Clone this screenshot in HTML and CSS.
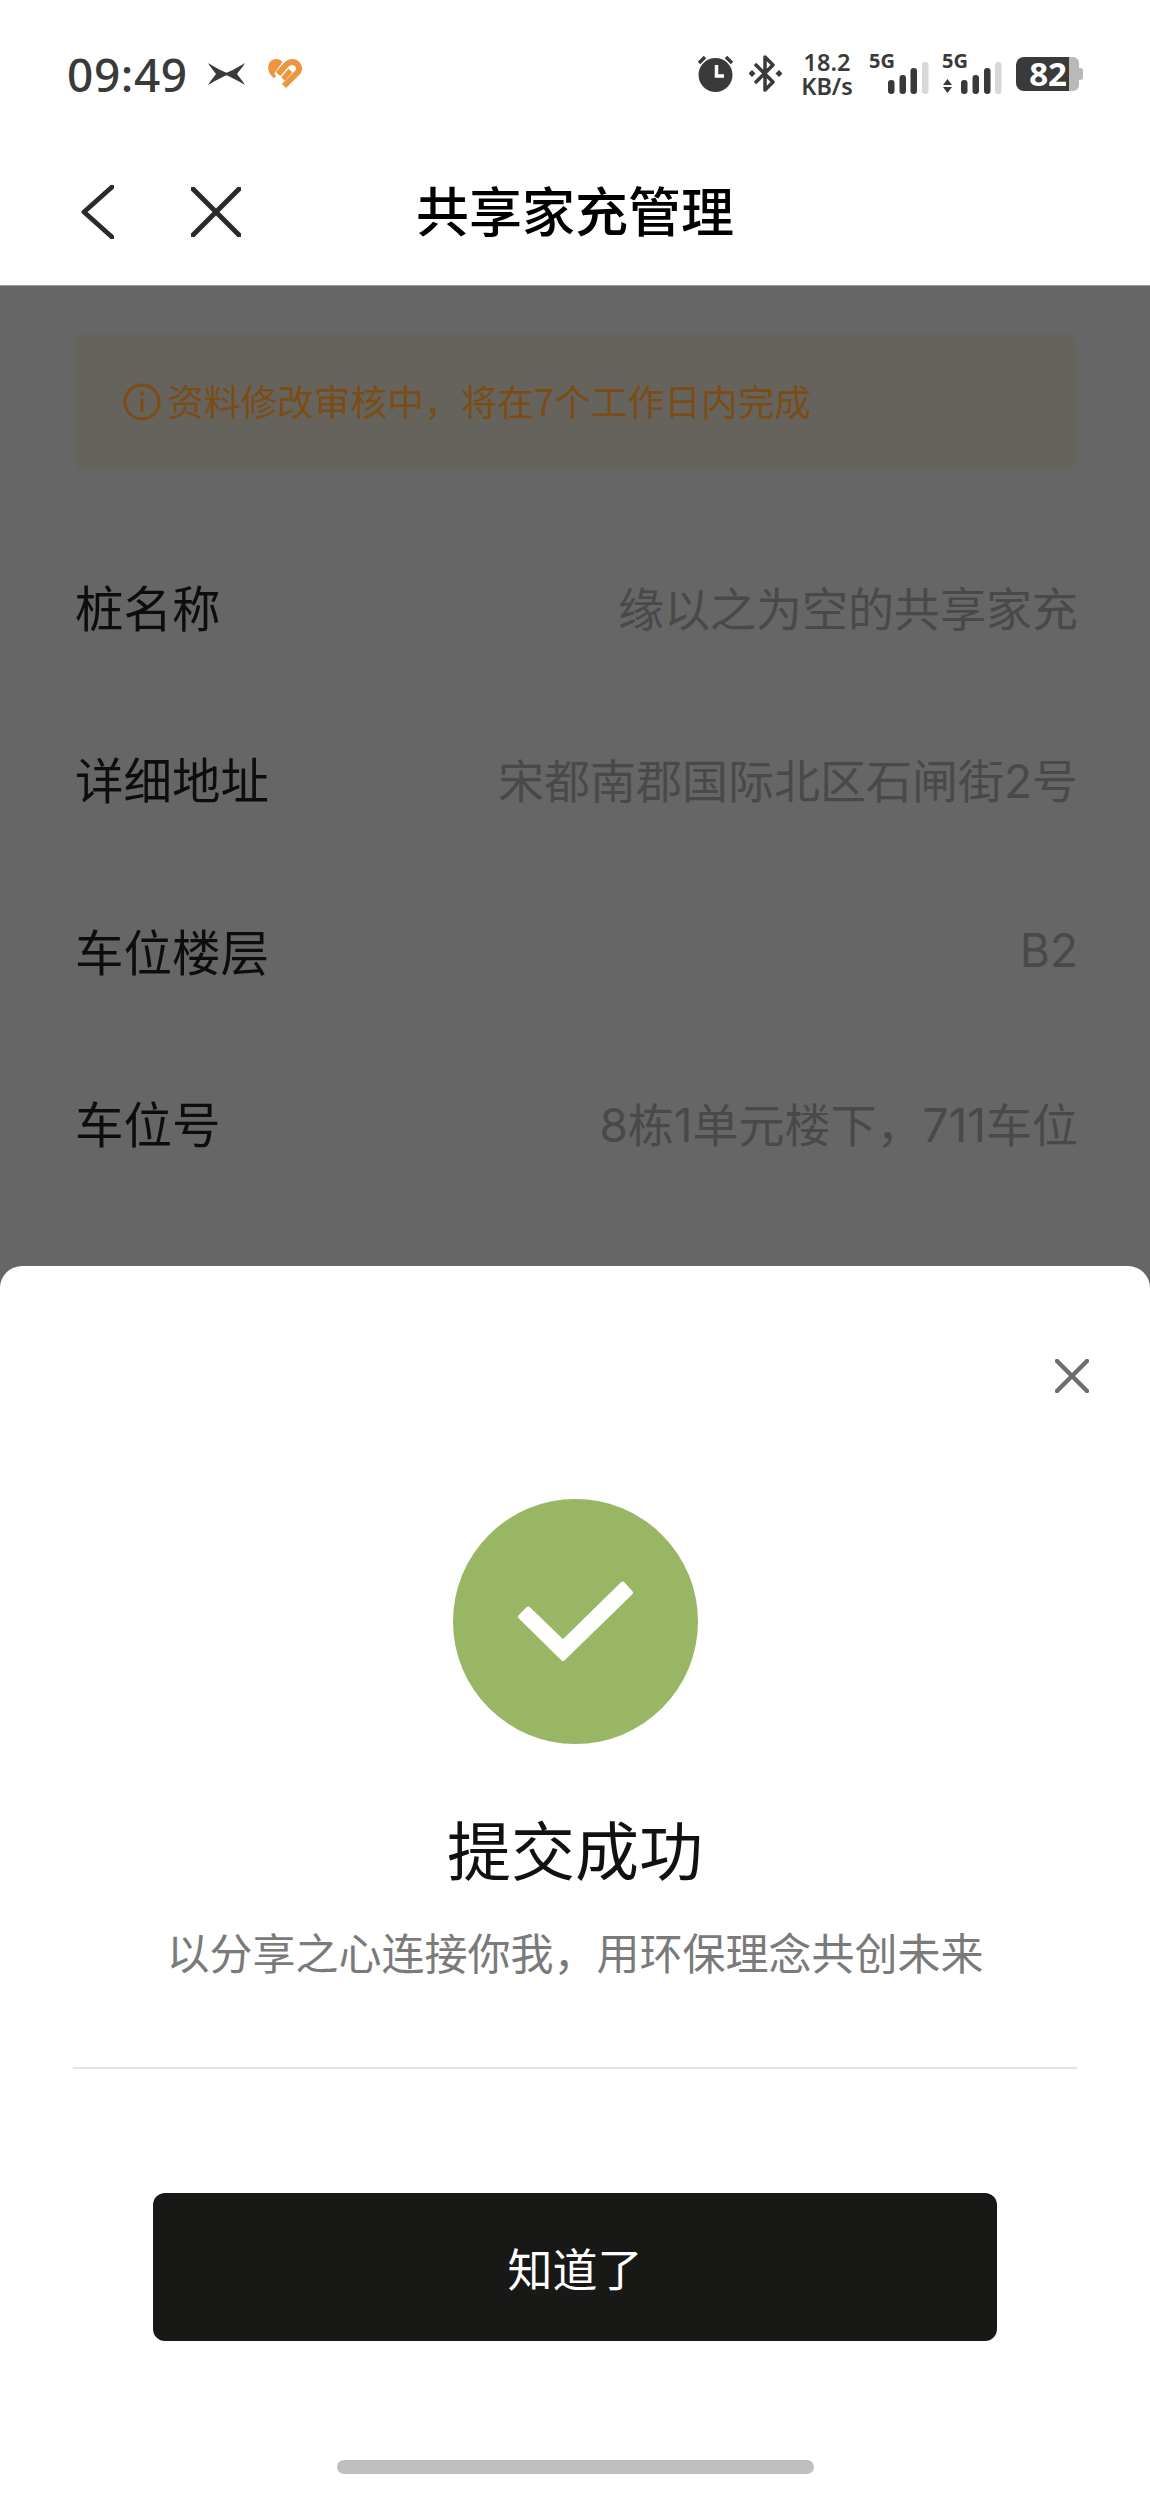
FILE: index.html
```html
<!DOCTYPE html>
<html lang="zh-CN">
<head>
<meta charset="utf-8">
<title>共享家充管理</title>
<link rel="stylesheet" href="styles.css">
</head>
<body>
<div class="screen">
  <header class="top">
    <div class="status">
      <div class="status-left">
        <span class="time">09:49</span>
        <svg class="ic-xp" viewBox="0 0 37 22"><path d="M0 0C8 5 16 9 22 11 16 13 8 17 0 22 3 17 6 14 8 11 6 8 3 5 0 0Z"/><path d="M37 0C29 5 21 9 15 11 21 13 29 17 37 22 34 17 31 14 29 11 31 8 34 5 37 0Z"/></svg>
        <svg class="ic-heart" viewBox="0 0 36 32"><path class="heart-fill" d="M3 16C-1 9 2 1 9 1 12 1 14 2 15.500 4L7.500 15 9 19 6.500 20Z"/><path class="heart-line" d="M17 28L31 14C34 9 30 4 25 4 23 4 21 5 19 7L11 16"/><path class="heart-line thin" d="M16 21L23.500 12.500"/></svg>
      </div>
      <div class="status-right">
        <svg class="ic-alarm" viewBox="0 0 37 37"><circle cx="18.500" cy="20" r="17"/><path class="ears" d="M2 8L8 2M35 8L29 2"/><path class="hands" d="M19.500 10V21H27"/></svg>
        <svg class="ic-bt" viewBox="0 0 33 37"><path d="M6 9L24 27 16 35V2L24 10 6 28"/><rect x="0.500" y="16" width="5" height="5" transform="rotate(45 3 18.500)"/><rect x="27.500" y="16" width="5" height="5" transform="rotate(45 30 18.500)"/></svg>
        <div class="speed"><span>18.2</span><span>KB/s</span></div>
        <svg class="ic-sig" viewBox="0 0 62 42"><text x="1" y="15">5G</text><rect x="20" y="27" width="6.500" height="14" rx="3"/><rect x="31.500" y="22" width="6.500" height="19" rx="3"/><rect x="42.500" y="15" width="6.500" height="26" rx="3"/><rect class="off" x="54" y="9" width="6.500" height="32" rx="3"/></svg>
        <svg class="ic-sig" viewBox="0 0 62 42"><text x="0" y="15">5G</text><path d="M5.500 26L10 32H1ZM1 34H10L5.500 40Z"/><rect x="19" y="27" width="6.500" height="14" rx="3"/><rect x="30.500" y="22" width="6.500" height="19" rx="3"/><rect x="42" y="15" width="6.500" height="26" rx="3"/><rect class="off" x="53" y="9" width="6.500" height="32" rx="3"/></svg>
        <div class="battery"><span class="battery-level">82</span><span class="battery-rest"></span><span class="battery-tip"></span></div>
      </div>
    </div>
    <nav class="nav">
      <div class="nav-icons">
        <svg class="ic-back" viewBox="0 0 34 56"><path d="M32 2L3 28 32 54"/></svg>
        <svg class="ic-close" viewBox="0 0 50 50"><path d="M2 2L48 48M48 2L2 48"/></svg>
      </div>
      <h1 class="nav-title">共享家充管理</h1>
    </nav>
  </header>

  <main class="behind">
    <div class="notice">
      <svg class="ic-info" viewBox="0 0 38 38"><circle cx="19" cy="19" r="17"/><path d="M19 16V29"/><circle class="dot" cx="19" cy="10.500" r="2"/></svg>
      <span>资料修改审核中，将在7个工作日内完成</span>
    </div>
    <div class="row"><span class="label">桩名称</span><span class="value">缘以之为空的共享家充</span></div>
    <div class="row"><span class="label">详细地址</span><span class="value">宋都南郡国际北区石闸街2号</span></div>
    <div class="row"><span class="label">车位楼层</span><span class="value">B2</span></div>
    <div class="row"><span class="label">车位号</span><span class="value">8栋1单元楼下，711车位</span></div>
  </main>

  <section class="sheet">
    <svg class="sheet-close" viewBox="0 0 34 34"><path d="M2 2L32 32M32 2L2 32"/></svg>
    <svg class="success" viewBox="0 0 245 245"><circle cx="122.500" cy="122.500" r="122.500"/><polygon points="67,117.700 75.300,109.500 110,143 169.700,84.500 178,93.700 110,160"/></svg>
    <h2 class="sheet-title">提交成功</h2>
    <p class="sheet-sub">以分享之心连接你我，用环保理念共创未来</p>
    <div class="divider"></div>
    <button class="confirm">知道了</button>
    <div class="home-bar"></div>
  </section>
</div>
</body>
</html>
```
FILE: styles.css
```css
* { box-sizing: border-box; }
html, body { margin: 0; padding: 0; }
body { font-family: "Noto Sans CJK SC", "Noto Sans", sans-serif; background: #fff; }
.screen { position: relative; width: 1150px; height: 2497px; overflow: hidden; display: flex; flex-direction: column; }

.top { background: #fff; height: 285px; flex: none; }
.status { height: 147px; padding: 0 67px 0 67px; display: flex; justify-content: space-between; align-items: center; }
.status-left { display: flex; align-items: center; }
.time { font-family: "Noto Sans", sans-serif; font-size: 46px; font-weight: 500; color: #3a3a3a; line-height: 46px; width: 121px; letter-spacing: 0.6px; }
.ic-xp { width: 37px; height: 22px; margin-left: 20px; fill: #3a3a3a; }
.ic-heart { width: 36px; height: 32px; margin-left: 22px; }
.heart-fill { fill: #ee9540; }
.heart-line { fill: none; stroke: #ee9540; stroke-width: 6; }
.heart-line.thin { stroke-width: 5; }
.status-right { display: flex; align-items: center; }
.ic-alarm { width: 37px; height: 37px; fill: #3a3a3a; }
.ears { fill: none; stroke: #3a3a3a; stroke-width: 3.500; }
.hands { fill: none; stroke: #fff; stroke-width: 3.500; }
.ic-bt { width: 33px; height: 37px; margin-left: 15px; }
.ic-bt path { fill: none; stroke: #3a3a3a; stroke-width: 3.500; stroke-linejoin: round; }
.ic-bt rect { fill: #3a3a3a; }
.speed { margin-left: 19px; width: 52px; display: flex; flex-direction: column; align-items: center; font-family: "Noto Sans", sans-serif; font-size: 23.500px; font-weight: 600; line-height: 24px; color: #3a3a3a; }
.ic-sig { width: 62px; height: 42px; margin-left: 15px; fill: #3a3a3a; overflow: visible; }
.ic-sig + .ic-sig { margin-left: 12px; }
.ic-sig text { font-family: "Noto Sans", sans-serif; font-size: 20px; font-weight: 700; }
.ic-sig .off { fill: #d8d8d8; }
.battery { margin-left: 12px; display: flex; align-items: center; height: 34px; width: 67px; }
.battery-level { width: 53px; height: 34px; background: #3a3a3a; border-radius: 8px 0 0 8px; color: #fff; font-family: "Noto Sans", sans-serif; font-size: 33px; font-weight: 700; line-height: 34px; text-align: right; padding-right: 2px; }
.battery-rest { width: 10px; height: 34px; background: #b9b9b9; border-radius: 0 6px 6px 0; }
.battery-tip { width: 4px; height: 12px; background: #b9b9b9; border-radius: 0 3px 3px 0; }

.nav { height: 138px; position: relative; display: flex; align-items: center; padding-left: 81px; }
.nav-icons { display: flex; align-items: center; margin-top: -9px; }
.ic-back { width: 33px; height: 54px; fill: none; stroke: #2a2a2a; stroke-width: 5; stroke-linecap: round; stroke-linejoin: round; }
.ic-close { width: 50px; height: 50px; margin-left: 77px; fill: none; stroke: #2a2a2a; stroke-width: 5; stroke-linecap: round; }
.nav-title { position: absolute; left: 0; right: 0; top: -5px; margin: 0; text-align: center; font-size: 53px; font-weight: 500; line-height: 134px; color: #000; }

.behind { flex: 1; background: #666; padding: 48px 72px 0 75px; border-top: 1px solid #9a9a9a; }
.notice { height: 136px; margin-right: 2px; margin-bottom: 50px; background: #66635d; border-radius: 10px; display: flex; align-items: center; padding-left: 48px; gap: 6px; font-size: 36.700px; color: #7a4d17; }
.notice span { position: relative; top: -2px; }
.ic-info { width: 38px; height: 38px; flex: none; fill: none; stroke: #7a4d17; stroke-width: 3; }
.ic-info .dot { fill: #7a4d17; stroke: none; }
.row { height: 172px; display: flex; justify-content: space-between; align-items: center; }
.label { font-size: 48.500px; color: #0d0d0d; }
.value { font-family: "Inter", "Noto Sans CJK SC", sans-serif; font-size: 46px; color: #494949; }

.sheet { position: absolute; left: 0; right: 0; bottom: 0; height: 1231px; background: #fff; border-radius: 22px 22px 0 0; display: flex; flex-direction: column; align-items: center; }
.sheet-close { width: 34px; height: 34px; align-self: flex-end; margin: 93px 61px 0 0; fill: none; stroke: #6e6e6e; stroke-width: 4.500; stroke-linecap: round; }
.success { width: 245px; height: 245px; margin-top: 106px; flex: none; }
.success circle { fill: #98b664; }
.success polygon { fill: #fff; stroke: #fff; stroke-width: 4; stroke-linejoin: round; }
.sheet-title { margin: 58px 0 0; font-size: 64px; font-weight: 400; line-height: 90px; color: #111; }
.sheet-sub { margin: 28px 0 0; font-size: 43px; line-height: 62px; color: #7a7a7a; }
.divider { width: 1004px; height: 2px; background: #e4e4e4; margin-top: 85px; flex: none; }
.confirm { width: 844px; height: 148px; margin-top: 124px; background: #181816; color: #fff; border: 0; border-radius: 12px; font-family: inherit; font-size: 45px; padding: 0; flex: none; }
.home-bar { width: 477px; height: 14px; background: #bfbfbf; border-radius: 7px; margin-top: 119px; flex: none; }
```
